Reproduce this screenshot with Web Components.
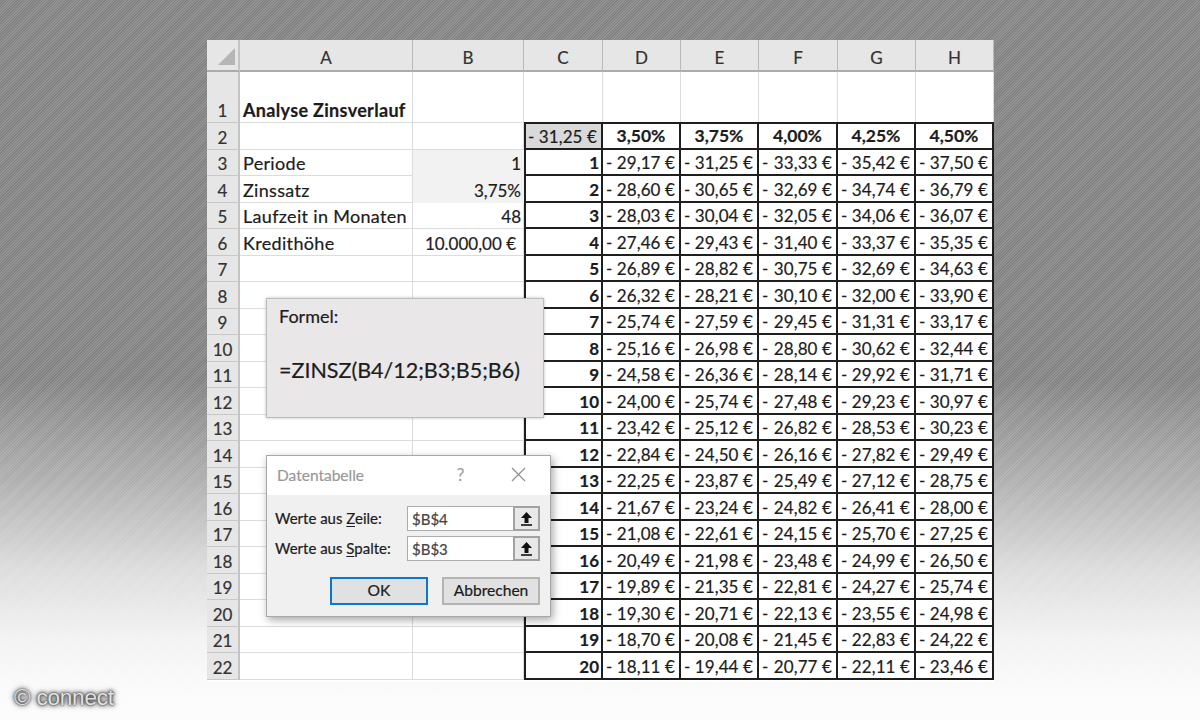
<!DOCTYPE html>
<html lang="de">
<head>
<meta charset="utf-8">
<title>Datentabelle</title>
<style>
html, body { margin: 0; height: 100%; }
</style>
</head>
<body>
<credit-page>
  <zins-sheet>
    <formula-note slot="over" label="Formel:" formula="=ZINSZ(B4/12;B3;B5;B6)"></formula-note>
    <table-dialog slot="over" heading="Datentabelle">
      <ref-field hotkey="Z" before="Werte aus " after="eile:" value="$B$4"></ref-field>
      <ref-field hotkey="S" before="Werte aus " after="palte:" value="$B$3"></ref-field>
      <dialog-button slot="actions" primary>OK</dialog-button>
      <dialog-button slot="actions">Abbrechen</dialog-button>
    </table-dialog>
  </zins-sheet>
  <span slot="mark">© connect</span>
</credit-page>
<script>
const FONT = 'Lato, "Liberation Sans", sans-serif';

class CreditPage extends HTMLElement {
  connectedCallback() {
    this.attachShadow({ mode: 'open' }).innerHTML = `
      <style>
        :host {
          display: block;
          box-sizing: border-box;
          position: relative;
          width: 1200px;
          height: 720px;
          overflow: hidden;
          padding: 40px 206px 0 207px;
          background:
            linear-gradient(to bottom, rgba(255,255,255,0) 0, rgba(255,255,255,0) 380px, rgba(255,255,255,.35) 480px, rgba(255,255,255,.72) 570px, rgba(255,255,255,.9) 640px, #fcfcfc 700px),
            repeating-linear-gradient(135deg, #828282 0 1px, #939393 1px 2px);
        }
        .mark {
          position: absolute;
          left: 14px;
          top: 686px;
          font: 22.5px/24px "Liberation Sans", sans-serif;
          letter-spacing: -.2px;
          color: #e2e2e2;
          text-shadow: 0 0 2px #222, 0 0 4px #333, 0 0 6px #555;
        }
      </style>
      <slot></slot>
      <div class="mark"><slot name="mark"></slot></div>`;
  }
}

const HEADS = ['A', 'B', 'C', 'D', 'E', 'F', 'G', 'H'];
const RATES = ['3,50%', '3,75%', '4,00%', '4,25%', '4,50%'];
const SIDE = [
  ['<b>Analyse Zinsverlauf</b>', ''],
  ['', ''],
  ['Periode', '1'],
  ['Zinssatz', '3,75%'],
  ['Laufzeit in Monaten', '48'],
  ['Kredithöhe', '10.000,00 €']
];
const VALUES = [
  '29,17 31,25 33,33 35,42 37,50',
  '28,60 30,65 32,69 34,74 36,79',
  '28,03 30,04 32,05 34,06 36,07',
  '27,46 29,43 31,40 33,37 35,35',
  '26,89 28,82 30,75 32,69 34,63',
  '26,32 28,21 30,10 32,00 33,90',
  '25,74 27,59 29,45 31,31 33,17',
  '25,16 26,98 28,80 30,62 32,44',
  '24,58 26,36 28,14 29,92 31,71',
  '24,00 25,74 27,48 29,23 30,97',
  '23,42 25,12 26,82 28,53 30,23',
  '22,84 24,50 26,16 27,82 29,49',
  '22,25 23,87 25,49 27,12 28,75',
  '21,67 23,24 24,82 26,41 28,00',
  '21,08 22,61 24,15 25,70 27,25',
  '20,49 21,98 23,48 24,99 26,50',
  '19,89 21,35 22,81 24,27 25,74',
  '19,30 20,71 22,13 23,55 24,98',
  '18,70 20,08 21,45 22,83 24,22',
  '18,11 19,44 20,77 22,11 23,46'
].map(r => r.split(' '));

const euro = v => `<span>-</span><span>${v} €</span>`;

class ZinsSheet extends HTMLElement {
  connectedCallback() {
    let cells = '<div class="corner"><svg width="17" height="17" viewBox="0 0 17 17"><path d="M0 17 17 0V17Z" fill="#b5b5b5"/></svg></div>';
    HEADS.forEach(h => { cells += `<div class="colhead">${h}</div>`; });
    for (let row = 1; row <= 22; row++) {
      cells += `<div class="rowhead">${row}</div>`;
      const side = SIDE[row - 1] || ['', ''];
      const tint = row === 3 || row === 4 ? ' tint' : '';
      cells += `<div class="cell label">${side[0]}</div>`;
      cells += `<div class="cell num${tint}${row === 6 ? ' money' : ''}">${side[1]}</div>`;
      if (row === 1) {
        for (let i = 0; i < 6; i++) cells += '<div class="cell"></div>';
      } else if (row === 2) {
        cells += `<div class="box first top acct shade">${euro('31,25')}</div>`;
        RATES.forEach(r => { cells += `<div class="box top rate">${r}</div>`; });
      } else {
        const n = row - 2;
        cells += `<div class="box first idx">${n}</div>`;
        VALUES[n - 1].forEach(v => { cells += `<div class="box acct">${euro(v)}</div>`; });
      }
    }
    this.attachShadow({ mode: 'open' }).innerHTML = `
      <style>
        :host {
          display: block;
          position: relative;
          width: 787px;
          font: 17px/1 ${FONT};
          color: #1c1c1c;
          -webkit-text-stroke: .2px currentColor;
        }
        .grid {
          display: grid;
          grid-template-columns: 33px 173px 111px 79px 78px 78px 79px 78px 78px;
          grid-template-rows: 32px 51px repeat(21, 26.5px);
          background: #fff;
          padding-bottom: 2px;
        }
        .grid > div {
          box-sizing: border-box;
          display: flex;
          align-items: flex-end;
          padding-bottom: 3px;
          white-space: nowrap;
          min-width: 0;
        }
        .corner, .colhead, .rowhead { background: #e6e6e6; }
        .grid > .corner {
          align-items: flex-end;
          justify-content: flex-end;
          padding: 0 3px 5px 0;
          border-right: 2px solid #c4c4c4;
          border-bottom: 2px solid #ababab;
        }
        .grid > .colhead {
          align-items: center;
          justify-content: center;
          padding: 4px 0 0;
          border-right: 1px solid #b9b9b9;
          border-bottom: 2px solid #ababab;
          color: #333;
        }
        .grid > .rowhead {
          justify-content: center;
          border-right: 2px solid #c4c4c4;
          border-bottom: 1px solid #c8c8c8;
          color: #333;
        }
        .cell {
          border-right: 1.5px solid #dcdcdc;
          border-bottom: 1.5px solid #dcdcdc;
          padding-left: 3px;
          padding-right: 2px;
        }
        .grid > .label { font-size: 18px; letter-spacing: .32px; }
        .grid > .num { justify-content: flex-end; }
        .grid > .money { padding-right: 7px; }
        .tint { background: #f2f2f2; border-color: #f2f2f2; }
        .box {
          border-right: 2px solid #1e1e1e;
          border-bottom: 2px solid #1e1e1e;
          padding-left: 3px;
          padding-right: 3px;
        }
        .first { border-left: 2px solid #1e1e1e; }
        .top { border-top: 2px solid #1e1e1e; margin-top: -1px; }
        .grid > .idx { justify-content: flex-end; font-weight: 700; padding-right: 2px; }
        .grid > .rate { justify-content: center; font-weight: 700; font-size: 17.5px; }
        .grid > .acct { justify-content: space-between; padding-right: 4px; letter-spacing: .1px; }
        .first.acct { padding-left: 2px; }
        .shade { background: #d9d9d9; }
        b { font-weight: 700; }
      </style>
      <div class="grid">${cells}</div>
      <slot name="over"></slot>`;
  }
}

class FormulaNote extends HTMLElement {
  connectedCallback() {
    this.attachShadow({ mode: 'open' }).innerHTML = `
      <style>
        :host {
          display: flex;
          flex-direction: column;
          box-sizing: border-box;
          position: absolute;
          left: 59px;
          top: 258px;
          width: 278px;
          height: 120px;
          padding: 6px 12px 0 12px;
          background: #e9e7e8;
          border: 1px solid #bdbdbd;
          box-shadow: 0 0 3px rgba(0,0,0,.25);
          font: 18px/22px ${FONT};
          color: #1c1c1c;
        }
        .f { margin-top: 30px; font-size: 21.5px; line-height: 26px; white-space: nowrap; }
      </style>
      <div>${this.getAttribute('label')}</div>
      <div class="f">${this.getAttribute('formula')}</div>`;
  }
}

class TableDialog extends HTMLElement {
  connectedCallback() {
    this.attachShadow({ mode: 'open' }).innerHTML = `
      <style>
        :host {
          display: flex;
          flex-direction: column;
          box-sizing: border-box;
          position: absolute;
          left: 59px;
          top: 415px;
          width: 285px;
          height: 162px;
          background: #f0f0f0;
          border: 1px solid #a8a8a8;
          box-shadow: 2px 3px 8px rgba(0,0,0,.35);
          font: 15px/18px ${FONT};
          color: #1c1c1c;
        }
        .title {
          display: flex;
          align-items: center;
          height: 39px;
          flex: none;
          background: #fff;
          padding: 0 24px 2px 10px;
          box-sizing: border-box;
          color: #999;
          font-size: 15.5px;
        }
        .title span { flex: 1; }
        .title .help { flex: none; width: 17px; margin-right: 42px; text-align: center; font-size: 17px; color: #a0a0a0; }
        .form { display: flex; flex-direction: column; gap: 5px; padding: 11px 10px 0 8px; }
        .actions { display: flex; justify-content: flex-end; gap: 14px; padding: 16px 10px 0 0; }
      </style>
      <div class="title">
        <span>${this.getAttribute('heading')}</span>
        <div class="help">?</div>
        <svg width="15" height="15" viewBox="0 0 15 15"><path d="M1 1 14 14M14 1 1 14" stroke="#8f8f8f" stroke-width="1.2" fill="none"/></svg>
      </div>
      <div class="form"><slot></slot></div>
      <div class="actions"><slot name="actions"></slot></div>`;
  }
}

class RefField extends HTMLElement {
  connectedCallback() {
    const a = n => this.getAttribute(n);
    this.attachShadow({ mode: 'open' }).innerHTML = `
      <style>
        :host { display: flex; align-items: center; height: 25px; }
        label { width: 132px; flex: none; white-space: nowrap; padding-bottom: 1px; }
        u { text-underline-offset: 2px; }
        .input {
          flex: 1;
          display: flex;
          box-sizing: border-box;
          height: 25px;
          background: #fff;
          border: 1px solid #adadad;
        }
        .value { flex: 1; padding-left: 4px; line-height: 24px; color: #444; }
        .pick {
          width: 27px;
          flex: none;
          display: flex;
          align-items: center;
          justify-content: center;
          background: #e8e8e8;
          border: 2px solid #a2a2a2;
          margin: -1px;
          box-sizing: border-box;
        }
      </style>
      <label>${a('before')}<u>${a('hotkey')}</u>${a('after')}</label>
      <div class="input">
        <div class="value">${a('value')}</div>
        <div class="pick"><svg width="13" height="14" viewBox="0 0 13 14"><path d="M6.5 0 12 6H8.5V11H4.5V6H1Z" fill="#111"/><path d="M1 13H12" stroke="#111" stroke-width="1.6"/></svg></div>
      </div>`;
  }
}

class DialogButton extends HTMLElement {
  connectedCallback() {
    this.attachShadow({ mode: 'open' }).innerHTML = `
      <style>
        :host {
          display: flex;
          align-items: center;
          justify-content: center;
          box-sizing: border-box;
          width: 98px;
          height: 28px;
          padding-bottom: 2px;
          background: #e1e1e1;
          border: 2px solid #b4b4b4;
          font-size: 15.6px;
        }
        :host([primary]) { border-color: #0a78cf; }
      </style>
      <slot></slot>`;
  }
}

customElements.define('credit-page', CreditPage);
customElements.define('zins-sheet', ZinsSheet);
customElements.define('formula-note', FormulaNote);
customElements.define('table-dialog', TableDialog);
customElements.define('ref-field', RefField);
customElements.define('dialog-button', DialogButton);
</script>
</body>
</html>
